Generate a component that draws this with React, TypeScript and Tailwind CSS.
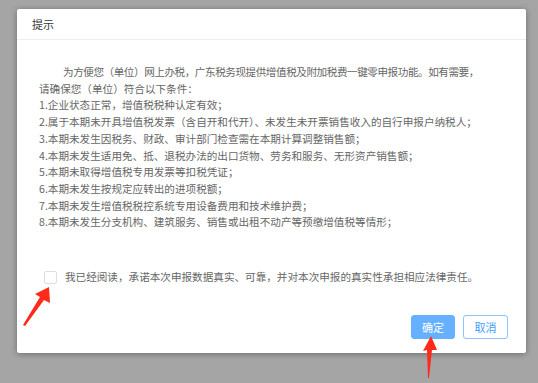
import React from "react";

const lines = [
  "1.企业状态正常，增值税税种认定有效；",
  "2.属于本期未开具增值税发票（含自开和代开）、未发生未开票销售收入的自行申报户纳税人；",
  "3.本期未发生因税务、财政、审计部门检查需在本期计算调整销售额；",
  "4.本期未发生适用免、抵、退税办法的出口货物、劳务和服务、无形资产销售额；",
  "5.本期未取得增值税专用发票等扣税凭证；",
  "6.本期未发生按规定应转出的进项税额；",
  "7.本期未发生增值税税控系统专用设备费用和技术维护费；",
  "8.本期未发生分支机构、建筑服务、销售或出租不动产等预缴增值税等情形；",
];

export default function App() {
  return (
    <div
      className="relative w-[538px] h-[383px] bg-[#a5a5a5] overflow-hidden pt-[9px] pl-[17px]"
      style={{ fontFamily: '"Noto Sans CJK SC", "Noto Sans", sans-serif' }}
    >
      <div className="w-[509px] h-[344px] bg-white rounded-[2px] shadow-[0_1px_6px_rgba(0,0,0,0.35)] flex flex-col">
        <div className="h-[31px] border-b border-[#ebeef5] flex items-center pl-[15px] text-[11px] text-[#333]">
          提示
        </div>
        <div className="pl-[22px] pr-[12px] pt-[24px] text-[10.6px] leading-[16.7px] text-[#666]">
          <p className="indent-[24px]">
            <span className="tracking-[-0.45px] whitespace-nowrap">
              为方便您（单位）网上办税，广东税务现提供增值税及附加税费一键零申报功能。如有需要，
            </span>
            <br />
            请确保您（单位）符合以下条件：
          </p>
          {lines.map((l) => (
            <p key={l} className="whitespace-nowrap">{l}</p>
          ))}
        </div>
        <div className="flex items-center mt-[39px] pl-[27px] h-[14px]">
          <span className="w-[13px] h-[13px] border border-[#dcdfe6] rounded-[2px] bg-white" />
          <span className="ml-[8px] text-[10.6px] text-[#666] whitespace-nowrap">
            我已经阅读，承诺本次申报数据真实、可靠，并对本次申报的真实性承担相应法律责任。
          </span>
        </div>
        <div className="flex justify-end gap-[8px] mt-auto mb-[14px] pr-[18px]">
          <button className="w-[44px] h-[24px] rounded-[3px] bg-[#66b1ff] text-white text-[11px] border border-[#66b1ff]">
            确定
          </button>
          <button className="w-[45px] h-[24px] rounded-[3px] bg-white text-[#409eff] text-[11px] border border-[#8cc5ff]">
            取消
          </button>
        </div>
      </div>
      <svg className="absolute left-0 top-0" width="538" height="383" viewBox="0 0 538 383">
        <polygon points="49,287 50,303 44,300 25,326 23,325 40,297 35,294" fill="#ff2a1a" />
        <polygon points="431,336 437,350 432,350 429,378 428,378 427,350 423,351" fill="#ff2a1a" />
      </svg>
    </div>
  );
}
